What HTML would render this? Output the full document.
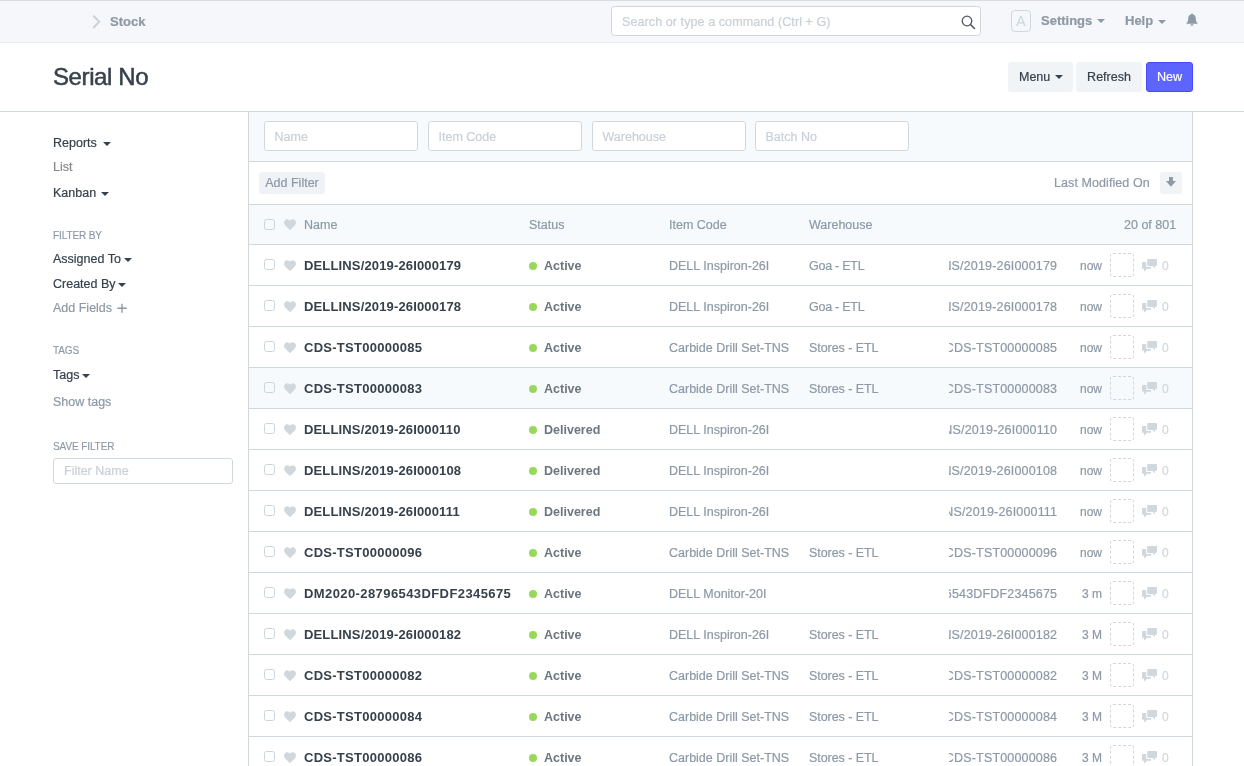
<!DOCTYPE html>
<html><head><meta charset="utf-8">
<style>
*{box-sizing:border-box;margin:0;padding:0}
html,body{width:1244px;height:766px;overflow:hidden;background:#fff;-webkit-font-smoothing:antialiased;-webkit-text-stroke-width:0.2px;font-family:"Liberation Sans",sans-serif;color:#36414c;font-size:13px}
.abs{position:absolute;white-space:nowrap}
#nav{position:absolute;left:0;top:0;width:1244px;height:43px;background:#f5f7fa;border-top:1px solid #d8dce0;border-bottom:1px solid #e8ecf0}
.caret{position:absolute;width:0;height:0;border-left:4px solid transparent;border-right:4px solid transparent;border-top:4px solid currentColor}
.hline{position:absolute;height:1px;background:#d1d8dd}
.vline{position:absolute;width:1px;background:#d1d8dd}
.inp{position:absolute;top:121px;width:154px;height:30px;background:#fff;border:1px solid #d1d8dd;border-radius:3px;color:#c9d0d7;font-size:12.5px;padding-left:9.5px;line-height:30px}
.btn{position:absolute;border-radius:3px;background:#f0f4f7;text-align:center;white-space:nowrap}
.row{position:absolute;left:249px;width:943px;height:41px;border-bottom:1px solid #d1d8dd;background:#fff}
.row.hov{background:#f7fafc}
.row .cb{position:absolute;left:15px;top:14px;width:11px;height:11px;border:1px solid #cdd4da;border-radius:2.5px}
.row .heart{position:absolute;left:35px;top:15px}
.t{position:absolute;top:0;line-height:40px;white-space:nowrap}
.nm{left:55px;top:1px;-webkit-text-stroke-width:0;font-weight:bold;font-size:13px;color:#36414c;letter-spacing:0.1px}
.dot{position:absolute;left:280px;top:17px;width:8px;height:8px;border-radius:50%;background:#98d85b}
.st{left:295px;top:1px;-webkit-text-stroke-width:0;font-weight:bold;font-size:12.5px;color:#6c7680}
.ic{left:420px;top:1px;font-size:12.5px;color:#8d99a6}
.wh{left:560px;top:1px;font-size:12.5px;color:#8d99a6;letter-spacing:-0.25px}
.clip{position:absolute;left:700px;top:0;width:108px;height:40px;overflow:hidden}
.clip span{position:absolute;right:-0.2px;top:1px;letter-spacing:0.17px;line-height:40px;white-space:nowrap;font-size:12.5px;color:#8d99a6}
.md{left:800px;width:53px;text-align:right;top:1px;font-size:12px;color:#8d99a6}
.dash{position:absolute;left:861px;top:8px;width:24px;height:24px;border:1px dashed #d1d8dd;border-radius:3px}
.cmt{position:absolute;left:893px;top:14px}
.zero{left:913px;top:1px;font-size:12px;color:#d1d8dd}
.side{position:absolute;left:53px;white-space:nowrap;font-size:12.5px;color:#36414c}
.side.m{color:#8d99a6}
.lbl{position:absolute;left:53px;font-size:10px;color:#8d99a6;letter-spacing:-0.1px;-webkit-text-stroke:0.15px #8d99a6}
</style></head><body><div id="wrap" style="position:absolute;left:0;top:0;width:1244px;height:766px;will-change:transform">
<div id="nav">
  <svg class="abs" style="left:91px;top:13px" width="10" height="16" viewBox="0 0 10 16"><path d="M2.2 1.6 L8.2 7.8 L2.2 14" fill="none" stroke="#c9d0d7" stroke-width="1.9"/></svg>
  <div class="abs" style="left:110px;top:13px;font-weight:bold;font-size:13px;color:#8d99a6">Stock</div>
  <div class="abs" style="left:611px;top:5px;width:370px;height:30px;background:#fff;border:1px solid #d1d8dd;border-radius:3.5px"></div>
  <div class="abs" style="left:622px;top:14px;color:#c9d0d7;font-size:12.6px;letter-spacing:0.05px">Search or type a command (Ctrl + G)</div>
  <svg class="abs" style="left:960px;top:13px" width="16" height="16" viewBox="0 0 16 16"><circle cx="7" cy="7" r="4.8" fill="none" stroke="#4f5863" stroke-width="1.3"/><path d="M10.5 10.5 L14.5 14.5" stroke="#4f5863" stroke-width="1.6" stroke-linecap="round"/></svg>
  <div class="abs" style="left:1011px;top:9px;width:20px;height:22px;border:1px solid #d1d8dd;border-radius:4px;color:#d1d8dd;font-size:14px;text-align:center;line-height:20px">A</div>
  <div class="abs" style="left:1041px;top:12px;font-weight:bold;font-size:13px;color:#8d99a6">Settings</div>
  <div class="caret" style="left:1097px;top:18px;color:#8d99a6"></div>
  <div class="abs" style="left:1125px;top:12px;font-weight:bold;font-size:13px;color:#8d99a6">Help</div>
  <div class="caret" style="left:1158px;top:19px;color:#8d99a6"></div>
  <svg class="abs" style="left:1186px;top:12px" width="12" height="13" viewBox="0 0 12 13"><path d="M6 0.5 C6.6 0.5 7 0.9 7 1.4 C9 1.9 9.8 3.6 9.8 5.5 C9.8 8 10.5 9.2 11.6 10.2 L11.6 10.8 L0.4 10.8 L0.4 10.2 C1.5 9.2 2.2 8 2.2 5.5 C2.2 3.6 3 1.9 5 1.4 C5 0.9 5.4 0.5 6 0.5 Z M4.5 11.3 L7.5 11.3 C7.5 12.2 6.8 12.8 6 12.8 C5.2 12.8 4.5 12.2 4.5 11.3 Z" fill="#8d99a6"/></svg>
</div>

<div class="abs" style="left:53px;top:63px;font-size:24px;letter-spacing:-0.4px;-webkit-text-stroke:0.5px #36414c;color:#36414c">Serial No</div>
<div class="btn" style="left:1008px;top:62px;width:65px;height:30px"></div><div class="abs" style="left:1019px;top:62px;line-height:30px;font-size:12.5px">Menu</div>
<div class="caret" style="left:1055px;top:75px;color:#36414c"></div>
<div class="btn" style="left:1076px;top:62px;width:66px;height:30px;line-height:30px;font-size:12.5px">Refresh</div>
<div class="btn" style="left:1146px;top:62px;width:47px;height:30px;line-height:30px;font-size:12.6px;background:#5e64ff;color:#fff;border:1px solid #444bff;line-height:28px">New</div>

<div class="hline" style="left:0;top:111px;width:1244px"></div>

<!-- sidebar -->
<div class="side" style="top:136px">Reports</div><div class="caret" style="left:103px;top:142px"></div>
<div class="side m" style="top:160px;color:#888">List</div>
<div class="side" style="top:186px">Kanban</div><div class="caret" style="left:101px;top:192px"></div>
<div class="lbl" style="top:230px">FILTER BY</div>
<div class="side" style="top:252px">Assigned To</div><div class="caret" style="left:124px;top:258px"></div>
<div class="side" style="top:277px">Created By</div><div class="caret" style="left:118px;top:283px"></div>
<div class="side m" style="top:301px">Add Fields</div><svg class="abs" style="left:117px;top:303px" width="10" height="10" viewBox="0 0 10 10"><path d="M0.3 5.3 H9.7 M5 0.8 V9.8" stroke="#8d99a6" stroke-width="1.4"/></svg>
<div class="lbl" style="top:345px">TAGS</div>
<div class="side" style="top:368px">Tags</div><div class="caret" style="left:82px;top:374px"></div>
<div class="side m" style="top:395px">Show tags</div>
<div class="lbl" style="top:441px">SAVE FILTER</div>
<div class="abs" style="left:53px;top:458px;width:180px;height:26px;border:1px solid #d1d8dd;border-radius:3px;padding-left:10px;line-height:24px;color:#c9d0d7;font-size:12.5px">Filter Name</div>

<!-- list -->
<div class="abs" style="left:249px;top:112px;width:943px;height:49px;background:#f7fafc"></div>
<div class="inp" style="left:264px">Name</div>
<div class="inp" style="left:428px">Item Code</div>
<div class="inp" style="left:592px">Warehouse</div>
<div class="inp" style="left:755px">Batch No</div>
<div class="hline" style="left:249px;top:161px;width:943px"></div>
<div class="btn" style="left:259px;top:172px;width:66px;height:22px;line-height:22px;font-size:12.5px;color:#8d99a6;background:#eff2f6">Add Filter</div>
<div class="abs" style="left:1054px;top:176px;font-size:12.5px;color:#8d99a6;letter-spacing:0.08px">Last Modified On</div>
<div class="btn" style="left:1160px;top:172px;width:22px;height:22px"></div>
<svg class="abs" style="left:1166px;top:176px" width="10" height="11" viewBox="0 0 10 11"><path d="M3 1 H6.9 V4.9 H10 L4.95 10.8 L0 4.9 H3 Z" fill="#8d99a6"/></svg>
<div class="hline" style="left:249px;top:204px;width:943px"></div>
<div class="abs" style="left:249px;top:205px;width:943px;height:39px;background:#f7fafc"></div>
<div class="abs" style="left:264px;top:219px;width:11px;height:11px;border:1px solid #cdd4da;border-radius:2.5px"></div>
<svg class="abs" style="left:284px;top:219px" width="12" height="11" viewBox="0 0 12 11"><path d="M6 11.2 L1.4 6.7 C-0.1 5.2 -0.4 2.9 0.8 1.4 C2.1 -0.3 4.6 -0.3 6 1.7 C7.4 -0.3 9.9 -0.3 11.2 1.4 C12.4 2.9 12.1 5.2 10.6 6.7 Z" fill="#d1d8dd"/></svg>
<div class="abs" style="left:304px;top:218px;font-size:12.5px;color:#8d99a6">Name</div>
<div class="abs" style="left:529px;top:218px;font-size:12.5px;color:#8d99a6">Status</div>
<div class="abs" style="left:669px;top:218px;font-size:12.5px;color:#8d99a6">Item Code</div>
<div class="abs" style="left:809px;top:218px;font-size:12.5px;color:#8d99a6">Warehouse</div>
<div class="abs" style="left:1124px;top:218px;font-size:12.5px;color:#8d99a6">20 of 801</div>
<div class="hline" style="left:249px;top:244px;width:943px"></div>

<div class="row" style="top:245px"><div class="cb"></div><svg class="heart" width="12" height="11" viewBox="0 0 12 11"><path d="M6 11.2 L1.4 6.7 C-0.1 5.2 -0.4 2.9 0.8 1.4 C2.1 -0.3 4.6 -0.3 6 1.7 C7.4 -0.3 9.9 -0.3 11.2 1.4 C12.4 2.9 12.1 5.2 10.6 6.7 Z" fill="#d1d8dd"/></svg><div class="t nm" style="letter-spacing:0.15px">DELLINS/2019-26I000179</div><div class="dot"></div><div class="t st">Active</div><div class="t ic">DELL Inspiron-26I</div><div class="t wh" style="letter-spacing:-0.25px">Goa - ETL</div><div class="clip"><span>DELLINS/2019-26I000179</span></div><div class="t md">now</div><div class="dash"></div><svg class="cmt" width="15" height="13" viewBox="0 0 15 13"><path d="M6.2 0 H14 A1 1 0 0 1 15 1 V6 A1 1 0 0 1 14 7 H12.8 L13 9.5 L10.6 7 H6.2 A1 1 0 0 1 5.2 6 V1 A1 1 0 0 1 6.2 0 Z" fill="#d1d8dd"/><path d="M0.8 3 H4.2 V7.2 A0.8 0.8 0 0 0 5 8 H9 V9.8 H4.9 L2.4 12.8 L1.8 9.8 H0.8 A0.8 0.8 0 0 1 0 9 V3.8 A0.8 0.8 0 0 1 0.8 3 Z" fill="#d1d8dd"/></svg><div class="t zero">0</div></div>
<div class="row" style="top:286px"><div class="cb"></div><svg class="heart" width="12" height="11" viewBox="0 0 12 11"><path d="M6 11.2 L1.4 6.7 C-0.1 5.2 -0.4 2.9 0.8 1.4 C2.1 -0.3 4.6 -0.3 6 1.7 C7.4 -0.3 9.9 -0.3 11.2 1.4 C12.4 2.9 12.1 5.2 10.6 6.7 Z" fill="#d1d8dd"/></svg><div class="t nm" style="letter-spacing:0.15px">DELLINS/2019-26I000178</div><div class="dot"></div><div class="t st">Active</div><div class="t ic">DELL Inspiron-26I</div><div class="t wh" style="letter-spacing:-0.25px">Goa - ETL</div><div class="clip"><span>DELLINS/2019-26I000178</span></div><div class="t md">now</div><div class="dash"></div><svg class="cmt" width="15" height="13" viewBox="0 0 15 13"><path d="M6.2 0 H14 A1 1 0 0 1 15 1 V6 A1 1 0 0 1 14 7 H12.8 L13 9.5 L10.6 7 H6.2 A1 1 0 0 1 5.2 6 V1 A1 1 0 0 1 6.2 0 Z" fill="#d1d8dd"/><path d="M0.8 3 H4.2 V7.2 A0.8 0.8 0 0 0 5 8 H9 V9.8 H4.9 L2.4 12.8 L1.8 9.8 H0.8 A0.8 0.8 0 0 1 0 9 V3.8 A0.8 0.8 0 0 1 0.8 3 Z" fill="#d1d8dd"/></svg><div class="t zero">0</div></div>
<div class="row" style="top:327px"><div class="cb"></div><svg class="heart" width="12" height="11" viewBox="0 0 12 11"><path d="M6 11.2 L1.4 6.7 C-0.1 5.2 -0.4 2.9 0.8 1.4 C2.1 -0.3 4.6 -0.3 6 1.7 C7.4 -0.3 9.9 -0.3 11.2 1.4 C12.4 2.9 12.1 5.2 10.6 6.7 Z" fill="#d1d8dd"/></svg><div class="t nm" style="letter-spacing:0.27px">CDS-TST00000085</div><div class="dot"></div><div class="t st">Active</div><div class="t ic">Carbide Drill Set-TNS</div><div class="t wh" style="letter-spacing:-0.06px">Stores - ETL</div><div class="clip"><span>CDS-TST00000085</span></div><div class="t md">now</div><div class="dash"></div><svg class="cmt" width="15" height="13" viewBox="0 0 15 13"><path d="M6.2 0 H14 A1 1 0 0 1 15 1 V6 A1 1 0 0 1 14 7 H12.8 L13 9.5 L10.6 7 H6.2 A1 1 0 0 1 5.2 6 V1 A1 1 0 0 1 6.2 0 Z" fill="#d1d8dd"/><path d="M0.8 3 H4.2 V7.2 A0.8 0.8 0 0 0 5 8 H9 V9.8 H4.9 L2.4 12.8 L1.8 9.8 H0.8 A0.8 0.8 0 0 1 0 9 V3.8 A0.8 0.8 0 0 1 0.8 3 Z" fill="#d1d8dd"/></svg><div class="t zero">0</div></div>
<div class="row hov" style="top:368px"><div class="cb"></div><svg class="heart" width="12" height="11" viewBox="0 0 12 11"><path d="M6 11.2 L1.4 6.7 C-0.1 5.2 -0.4 2.9 0.8 1.4 C2.1 -0.3 4.6 -0.3 6 1.7 C7.4 -0.3 9.9 -0.3 11.2 1.4 C12.4 2.9 12.1 5.2 10.6 6.7 Z" fill="#d1d8dd"/></svg><div class="t nm" style="letter-spacing:0.27px">CDS-TST00000083</div><div class="dot"></div><div class="t st">Active</div><div class="t ic">Carbide Drill Set-TNS</div><div class="t wh" style="letter-spacing:-0.06px">Stores - ETL</div><div class="clip"><span>CDS-TST00000083</span></div><div class="t md">now</div><div class="dash"></div><svg class="cmt" width="15" height="13" viewBox="0 0 15 13"><path d="M6.2 0 H14 A1 1 0 0 1 15 1 V6 A1 1 0 0 1 14 7 H12.8 L13 9.5 L10.6 7 H6.2 A1 1 0 0 1 5.2 6 V1 A1 1 0 0 1 6.2 0 Z" fill="#d1d8dd"/><path d="M0.8 3 H4.2 V7.2 A0.8 0.8 0 0 0 5 8 H9 V9.8 H4.9 L2.4 12.8 L1.8 9.8 H0.8 A0.8 0.8 0 0 1 0 9 V3.8 A0.8 0.8 0 0 1 0.8 3 Z" fill="#d1d8dd"/></svg><div class="t zero">0</div></div>
<div class="row" style="top:409px"><div class="cb"></div><svg class="heart" width="12" height="11" viewBox="0 0 12 11"><path d="M6 11.2 L1.4 6.7 C-0.1 5.2 -0.4 2.9 0.8 1.4 C2.1 -0.3 4.6 -0.3 6 1.7 C7.4 -0.3 9.9 -0.3 11.2 1.4 C12.4 2.9 12.1 5.2 10.6 6.7 Z" fill="#d1d8dd"/></svg><div class="t nm" style="letter-spacing:0.15px">DELLINS/2019-26I000110</div><div class="dot"></div><div class="t st">Delivered</div><div class="t ic">DELL Inspiron-26I</div><div class="clip"><span>DELLINS/2019-26I000110</span></div><div class="t md">now</div><div class="dash"></div><svg class="cmt" width="15" height="13" viewBox="0 0 15 13"><path d="M6.2 0 H14 A1 1 0 0 1 15 1 V6 A1 1 0 0 1 14 7 H12.8 L13 9.5 L10.6 7 H6.2 A1 1 0 0 1 5.2 6 V1 A1 1 0 0 1 6.2 0 Z" fill="#d1d8dd"/><path d="M0.8 3 H4.2 V7.2 A0.8 0.8 0 0 0 5 8 H9 V9.8 H4.9 L2.4 12.8 L1.8 9.8 H0.8 A0.8 0.8 0 0 1 0 9 V3.8 A0.8 0.8 0 0 1 0.8 3 Z" fill="#d1d8dd"/></svg><div class="t zero">0</div></div>
<div class="row" style="top:450px"><div class="cb"></div><svg class="heart" width="12" height="11" viewBox="0 0 12 11"><path d="M6 11.2 L1.4 6.7 C-0.1 5.2 -0.4 2.9 0.8 1.4 C2.1 -0.3 4.6 -0.3 6 1.7 C7.4 -0.3 9.9 -0.3 11.2 1.4 C12.4 2.9 12.1 5.2 10.6 6.7 Z" fill="#d1d8dd"/></svg><div class="t nm" style="letter-spacing:0.15px">DELLINS/2019-26I000108</div><div class="dot"></div><div class="t st">Delivered</div><div class="t ic">DELL Inspiron-26I</div><div class="clip"><span>DELLINS/2019-26I000108</span></div><div class="t md">now</div><div class="dash"></div><svg class="cmt" width="15" height="13" viewBox="0 0 15 13"><path d="M6.2 0 H14 A1 1 0 0 1 15 1 V6 A1 1 0 0 1 14 7 H12.8 L13 9.5 L10.6 7 H6.2 A1 1 0 0 1 5.2 6 V1 A1 1 0 0 1 6.2 0 Z" fill="#d1d8dd"/><path d="M0.8 3 H4.2 V7.2 A0.8 0.8 0 0 0 5 8 H9 V9.8 H4.9 L2.4 12.8 L1.8 9.8 H0.8 A0.8 0.8 0 0 1 0 9 V3.8 A0.8 0.8 0 0 1 0.8 3 Z" fill="#d1d8dd"/></svg><div class="t zero">0</div></div>
<div class="row" style="top:491px"><div class="cb"></div><svg class="heart" width="12" height="11" viewBox="0 0 12 11"><path d="M6 11.2 L1.4 6.7 C-0.1 5.2 -0.4 2.9 0.8 1.4 C2.1 -0.3 4.6 -0.3 6 1.7 C7.4 -0.3 9.9 -0.3 11.2 1.4 C12.4 2.9 12.1 5.2 10.6 6.7 Z" fill="#d1d8dd"/></svg><div class="t nm" style="letter-spacing:0.15px">DELLINS/2019-26I000111</div><div class="dot"></div><div class="t st">Delivered</div><div class="t ic">DELL Inspiron-26I</div><div class="clip"><span>DELLINS/2019-26I000111</span></div><div class="t md">now</div><div class="dash"></div><svg class="cmt" width="15" height="13" viewBox="0 0 15 13"><path d="M6.2 0 H14 A1 1 0 0 1 15 1 V6 A1 1 0 0 1 14 7 H12.8 L13 9.5 L10.6 7 H6.2 A1 1 0 0 1 5.2 6 V1 A1 1 0 0 1 6.2 0 Z" fill="#d1d8dd"/><path d="M0.8 3 H4.2 V7.2 A0.8 0.8 0 0 0 5 8 H9 V9.8 H4.9 L2.4 12.8 L1.8 9.8 H0.8 A0.8 0.8 0 0 1 0 9 V3.8 A0.8 0.8 0 0 1 0.8 3 Z" fill="#d1d8dd"/></svg><div class="t zero">0</div></div>
<div class="row" style="top:532px"><div class="cb"></div><svg class="heart" width="12" height="11" viewBox="0 0 12 11"><path d="M6 11.2 L1.4 6.7 C-0.1 5.2 -0.4 2.9 0.8 1.4 C2.1 -0.3 4.6 -0.3 6 1.7 C7.4 -0.3 9.9 -0.3 11.2 1.4 C12.4 2.9 12.1 5.2 10.6 6.7 Z" fill="#d1d8dd"/></svg><div class="t nm" style="letter-spacing:0.27px">CDS-TST00000096</div><div class="dot"></div><div class="t st">Active</div><div class="t ic">Carbide Drill Set-TNS</div><div class="t wh" style="letter-spacing:-0.06px">Stores - ETL</div><div class="clip"><span>CDS-TST00000096</span></div><div class="t md">now</div><div class="dash"></div><svg class="cmt" width="15" height="13" viewBox="0 0 15 13"><path d="M6.2 0 H14 A1 1 0 0 1 15 1 V6 A1 1 0 0 1 14 7 H12.8 L13 9.5 L10.6 7 H6.2 A1 1 0 0 1 5.2 6 V1 A1 1 0 0 1 6.2 0 Z" fill="#d1d8dd"/><path d="M0.8 3 H4.2 V7.2 A0.8 0.8 0 0 0 5 8 H9 V9.8 H4.9 L2.4 12.8 L1.8 9.8 H0.8 A0.8 0.8 0 0 1 0 9 V3.8 A0.8 0.8 0 0 1 0.8 3 Z" fill="#d1d8dd"/></svg><div class="t zero">0</div></div>
<div class="row" style="top:573px"><div class="cb"></div><svg class="heart" width="12" height="11" viewBox="0 0 12 11"><path d="M6 11.2 L1.4 6.7 C-0.1 5.2 -0.4 2.9 0.8 1.4 C2.1 -0.3 4.6 -0.3 6 1.7 C7.4 -0.3 9.9 -0.3 11.2 1.4 C12.4 2.9 12.1 5.2 10.6 6.7 Z" fill="#d1d8dd"/></svg><div class="t nm" style="letter-spacing:0.41px">DM2020-28796543DFDF2345675</div><div class="dot"></div><div class="t st">Active</div><div class="t ic">DELL Monitor-20I</div><div class="clip"><span>DM2020-28796543DFDF2345675</span></div><div class="t md">3 m</div><div class="dash"></div><svg class="cmt" width="15" height="13" viewBox="0 0 15 13"><path d="M6.2 0 H14 A1 1 0 0 1 15 1 V6 A1 1 0 0 1 14 7 H12.8 L13 9.5 L10.6 7 H6.2 A1 1 0 0 1 5.2 6 V1 A1 1 0 0 1 6.2 0 Z" fill="#d1d8dd"/><path d="M0.8 3 H4.2 V7.2 A0.8 0.8 0 0 0 5 8 H9 V9.8 H4.9 L2.4 12.8 L1.8 9.8 H0.8 A0.8 0.8 0 0 1 0 9 V3.8 A0.8 0.8 0 0 1 0.8 3 Z" fill="#d1d8dd"/></svg><div class="t zero">0</div></div>
<div class="row" style="top:614px"><div class="cb"></div><svg class="heart" width="12" height="11" viewBox="0 0 12 11"><path d="M6 11.2 L1.4 6.7 C-0.1 5.2 -0.4 2.9 0.8 1.4 C2.1 -0.3 4.6 -0.3 6 1.7 C7.4 -0.3 9.9 -0.3 11.2 1.4 C12.4 2.9 12.1 5.2 10.6 6.7 Z" fill="#d1d8dd"/></svg><div class="t nm" style="letter-spacing:0.15px">DELLINS/2019-26I000182</div><div class="dot"></div><div class="t st">Active</div><div class="t ic">DELL Inspiron-26I</div><div class="t wh" style="letter-spacing:-0.06px">Stores - ETL</div><div class="clip"><span>DELLINS/2019-26I000182</span></div><div class="t md">3 M</div><div class="dash"></div><svg class="cmt" width="15" height="13" viewBox="0 0 15 13"><path d="M6.2 0 H14 A1 1 0 0 1 15 1 V6 A1 1 0 0 1 14 7 H12.8 L13 9.5 L10.6 7 H6.2 A1 1 0 0 1 5.2 6 V1 A1 1 0 0 1 6.2 0 Z" fill="#d1d8dd"/><path d="M0.8 3 H4.2 V7.2 A0.8 0.8 0 0 0 5 8 H9 V9.8 H4.9 L2.4 12.8 L1.8 9.8 H0.8 A0.8 0.8 0 0 1 0 9 V3.8 A0.8 0.8 0 0 1 0.8 3 Z" fill="#d1d8dd"/></svg><div class="t zero">0</div></div>
<div class="row" style="top:655px"><div class="cb"></div><svg class="heart" width="12" height="11" viewBox="0 0 12 11"><path d="M6 11.2 L1.4 6.7 C-0.1 5.2 -0.4 2.9 0.8 1.4 C2.1 -0.3 4.6 -0.3 6 1.7 C7.4 -0.3 9.9 -0.3 11.2 1.4 C12.4 2.9 12.1 5.2 10.6 6.7 Z" fill="#d1d8dd"/></svg><div class="t nm" style="letter-spacing:0.27px">CDS-TST00000082</div><div class="dot"></div><div class="t st">Active</div><div class="t ic">Carbide Drill Set-TNS</div><div class="t wh" style="letter-spacing:-0.06px">Stores - ETL</div><div class="clip"><span>CDS-TST00000082</span></div><div class="t md">3 M</div><div class="dash"></div><svg class="cmt" width="15" height="13" viewBox="0 0 15 13"><path d="M6.2 0 H14 A1 1 0 0 1 15 1 V6 A1 1 0 0 1 14 7 H12.8 L13 9.5 L10.6 7 H6.2 A1 1 0 0 1 5.2 6 V1 A1 1 0 0 1 6.2 0 Z" fill="#d1d8dd"/><path d="M0.8 3 H4.2 V7.2 A0.8 0.8 0 0 0 5 8 H9 V9.8 H4.9 L2.4 12.8 L1.8 9.8 H0.8 A0.8 0.8 0 0 1 0 9 V3.8 A0.8 0.8 0 0 1 0.8 3 Z" fill="#d1d8dd"/></svg><div class="t zero">0</div></div>
<div class="row" style="top:696px"><div class="cb"></div><svg class="heart" width="12" height="11" viewBox="0 0 12 11"><path d="M6 11.2 L1.4 6.7 C-0.1 5.2 -0.4 2.9 0.8 1.4 C2.1 -0.3 4.6 -0.3 6 1.7 C7.4 -0.3 9.9 -0.3 11.2 1.4 C12.4 2.9 12.1 5.2 10.6 6.7 Z" fill="#d1d8dd"/></svg><div class="t nm" style="letter-spacing:0.27px">CDS-TST00000084</div><div class="dot"></div><div class="t st">Active</div><div class="t ic">Carbide Drill Set-TNS</div><div class="t wh" style="letter-spacing:-0.06px">Stores - ETL</div><div class="clip"><span>CDS-TST00000084</span></div><div class="t md">3 M</div><div class="dash"></div><svg class="cmt" width="15" height="13" viewBox="0 0 15 13"><path d="M6.2 0 H14 A1 1 0 0 1 15 1 V6 A1 1 0 0 1 14 7 H12.8 L13 9.5 L10.6 7 H6.2 A1 1 0 0 1 5.2 6 V1 A1 1 0 0 1 6.2 0 Z" fill="#d1d8dd"/><path d="M0.8 3 H4.2 V7.2 A0.8 0.8 0 0 0 5 8 H9 V9.8 H4.9 L2.4 12.8 L1.8 9.8 H0.8 A0.8 0.8 0 0 1 0 9 V3.8 A0.8 0.8 0 0 1 0.8 3 Z" fill="#d1d8dd"/></svg><div class="t zero">0</div></div>
<div class="row" style="top:737px"><div class="cb"></div><svg class="heart" width="12" height="11" viewBox="0 0 12 11"><path d="M6 11.2 L1.4 6.7 C-0.1 5.2 -0.4 2.9 0.8 1.4 C2.1 -0.3 4.6 -0.3 6 1.7 C7.4 -0.3 9.9 -0.3 11.2 1.4 C12.4 2.9 12.1 5.2 10.6 6.7 Z" fill="#d1d8dd"/></svg><div class="t nm" style="letter-spacing:0.27px">CDS-TST00000086</div><div class="dot"></div><div class="t st">Active</div><div class="t ic">Carbide Drill Set-TNS</div><div class="t wh" style="letter-spacing:-0.06px">Stores - ETL</div><div class="clip"><span>CDS-TST00000086</span></div><div class="t md">3 M</div><div class="dash"></div><svg class="cmt" width="15" height="13" viewBox="0 0 15 13"><path d="M6.2 0 H14 A1 1 0 0 1 15 1 V6 A1 1 0 0 1 14 7 H12.8 L13 9.5 L10.6 7 H6.2 A1 1 0 0 1 5.2 6 V1 A1 1 0 0 1 6.2 0 Z" fill="#d1d8dd"/><path d="M0.8 3 H4.2 V7.2 A0.8 0.8 0 0 0 5 8 H9 V9.8 H4.9 L2.4 12.8 L1.8 9.8 H0.8 A0.8 0.8 0 0 1 0 9 V3.8 A0.8 0.8 0 0 1 0.8 3 Z" fill="#d1d8dd"/></svg><div class="t zero">0</div></div>

<div class="vline" style="left:248px;top:111px;height:655px"></div>
<div class="vline" style="left:1192px;top:111px;height:655px"></div>
</div></body></html>
